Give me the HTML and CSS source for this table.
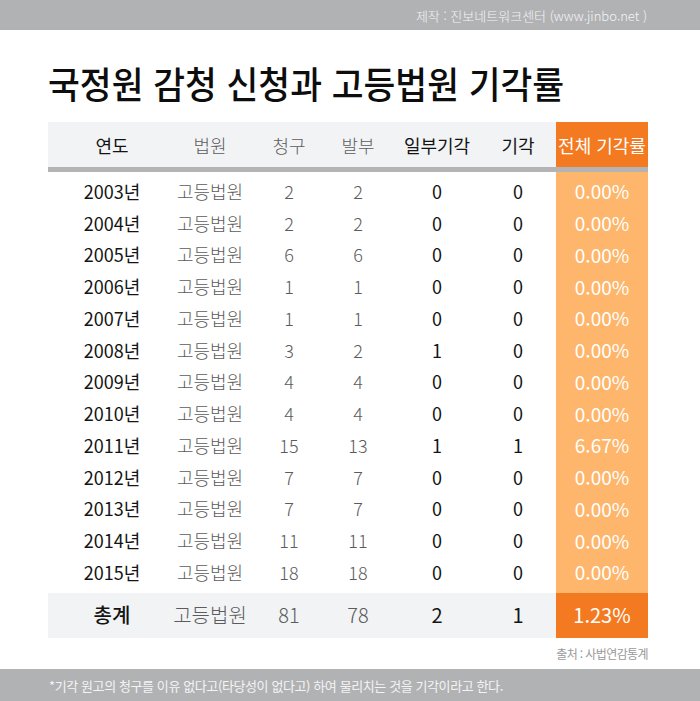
FILE: index.html
```html
<!DOCTYPE html>
<html lang="ko">
<head>
<meta charset="utf-8">
<title>국정원 감청 신청과 고등법원 기각률</title>
<link rel="stylesheet" href="styles.css">
</head>
<body>
<div class="topbar"><span class="credit">제작 : 진보네트워크센터 (www.jinbo.net )</span></div>
<h1 class="title"><span class="title-text">국정원 감청 신청과 고등법원 기각률</span></h1>
<div class="table">
  <div class="row head">
    <div class="c dark">연도</div>
    <div class="c gray">법원</div>
    <div class="c gray">청구</div>
    <div class="c gray">발부</div>
    <div class="c dark">일부기각</div>
    <div class="c dark">기각</div>
    <div class="c rate">전체 기각률</div>
  </div>
  <div class="rule"></div>
  <div class="body">
    <div class="row"><div class="c dark">2003년</div><div class="c gray">고등법원</div><div class="c gray">2</div><div class="c gray">2</div><div class="c dark">0</div><div class="c dark">0</div><div class="c rate">0.00%</div></div>
    <div class="row"><div class="c dark">2004년</div><div class="c gray">고등법원</div><div class="c gray">2</div><div class="c gray">2</div><div class="c dark">0</div><div class="c dark">0</div><div class="c rate">0.00%</div></div>
    <div class="row"><div class="c dark">2005년</div><div class="c gray">고등법원</div><div class="c gray">6</div><div class="c gray">6</div><div class="c dark">0</div><div class="c dark">0</div><div class="c rate">0.00%</div></div>
    <div class="row"><div class="c dark">2006년</div><div class="c gray">고등법원</div><div class="c gray">1</div><div class="c gray">1</div><div class="c dark">0</div><div class="c dark">0</div><div class="c rate">0.00%</div></div>
    <div class="row"><div class="c dark">2007년</div><div class="c gray">고등법원</div><div class="c gray">1</div><div class="c gray">1</div><div class="c dark">0</div><div class="c dark">0</div><div class="c rate">0.00%</div></div>
    <div class="row"><div class="c dark">2008년</div><div class="c gray">고등법원</div><div class="c gray">3</div><div class="c gray">2</div><div class="c dark">1</div><div class="c dark">0</div><div class="c rate">0.00%</div></div>
    <div class="row"><div class="c dark">2009년</div><div class="c gray">고등법원</div><div class="c gray">4</div><div class="c gray">4</div><div class="c dark">0</div><div class="c dark">0</div><div class="c rate">0.00%</div></div>
    <div class="row"><div class="c dark">2010년</div><div class="c gray">고등법원</div><div class="c gray">4</div><div class="c gray">4</div><div class="c dark">0</div><div class="c dark">0</div><div class="c rate">0.00%</div></div>
    <div class="row"><div class="c dark">2011년</div><div class="c gray">고등법원</div><div class="c gray">15</div><div class="c gray">13</div><div class="c dark">1</div><div class="c dark">1</div><div class="c rate">6.67%</div></div>
    <div class="row"><div class="c dark">2012년</div><div class="c gray">고등법원</div><div class="c gray">7</div><div class="c gray">7</div><div class="c dark">0</div><div class="c dark">0</div><div class="c rate">0.00%</div></div>
    <div class="row"><div class="c dark">2013년</div><div class="c gray">고등법원</div><div class="c gray">7</div><div class="c gray">7</div><div class="c dark">0</div><div class="c dark">0</div><div class="c rate">0.00%</div></div>
    <div class="row"><div class="c dark">2014년</div><div class="c gray">고등법원</div><div class="c gray">11</div><div class="c gray">11</div><div class="c dark">0</div><div class="c dark">0</div><div class="c rate">0.00%</div></div>
    <div class="row"><div class="c dark">2015년</div><div class="c gray">고등법원</div><div class="c gray">18</div><div class="c gray">18</div><div class="c dark">0</div><div class="c dark">0</div><div class="c rate">0.00%</div></div>
  </div>
  <div class="row total">
    <div class="c dark strong">총계</div>
    <div class="c gray">고등법원</div>
    <div class="c gray">81</div>
    <div class="c gray">78</div>
    <div class="c dark">2</div>
    <div class="c dark">1</div>
    <div class="c rate">1.23%</div>
  </div>
</div>
<div class="source">출처 : 사법연감통계</div>
<div class="footbar">*기각 원고의 청구를 이유 없다고(타당성이 없다고) 하여 물리치는 것을 기각이라고 한다.</div>
</body>
</html>
```

FILE: styles.css
```css
* { box-sizing: border-box; }

html, body {
  margin: 0;
  padding: 0;
  background: #ffffff;
}

body {
  width: 700px;
  height: 701px;
  overflow: hidden;
  font-family: "Noto Sans CJK KR", "Noto Sans", sans-serif;
  color: #111111;
}

.topbar {
  height: 30px;
  background: #b1b2b4;
  display: flex;
  align-items: center;
  justify-content: flex-end;
  padding-right: 53px;
}

.credit {
  font-size: 13px;
  letter-spacing: 0;
  color: #f4f4f4;
  line-height: 1;
  font-weight: 300;
}

.title {
  margin: 35px 0 20px 48px;
  font-size: 37px;
  line-height: 37px;
  height: 37px;
  font-weight: 500;
  color: #0d0d0d;
  white-space: nowrap;
}

.title-text {
  display: inline-block;
  transform: scaleX(0.935);
  transform-origin: left center;
}

.table {
  margin-left: 48px;
  width: 600px;
}

.row {
  display: grid;
  grid-template-columns: 104px 92px 66px 72px 86px 76px 92px;
  padding-left: 12px;
  height: 31.75px;
  align-items: stretch;
  font-size: 18px;
}

.c {
  display: flex;
  align-items: center;
  justify-content: center;
  white-space: nowrap;
  line-height: 1;
}

.dark { color: #141414; }
.gray { color: #5c5c5c; font-weight: 300; }

.rate {
  color: #ffffff;
  font-size: 19px;
  font-weight: 400;
}

.head {
  height: 45px;
  background: #f2f3f5;
  font-size: 18px;
}

.head .rate {
  background: #f47a21;
  color: #ffffff;
  font-size: 18px;
}

.rule {
  height: 5px;
  background: #b4b4b4;
}

.body {
  padding: 3px 0 5px;
  background: linear-gradient(to right, transparent 508px, #fdb66b 508px, #fdb66b 600px);
}

.total {
  height: 45px;
  background: #f2f3f5;
  font-size: 20px;
}

.total .rate {
  background: #f47a21;
  color: #ffffff;
  font-size: 20px;
}

.strong {
  font-weight: 500;
}

.source {
  width: 648px;
  text-align: right;
  margin-top: 9px;
  font-size: 12px;
  letter-spacing: -0.6px;
  color: #9a9a9a;
  line-height: 14px;
  height: 14px;
}

.footbar {
  margin-top: 8px;
  height: 33px;
  background: #b1b2b4;
  color: #f4f4f4;
  font-size: 13px;
  letter-spacing: -0.4px;
  padding-left: 49px;
  display: flex;
  align-items: center;
  white-space: nowrap;
}
```
